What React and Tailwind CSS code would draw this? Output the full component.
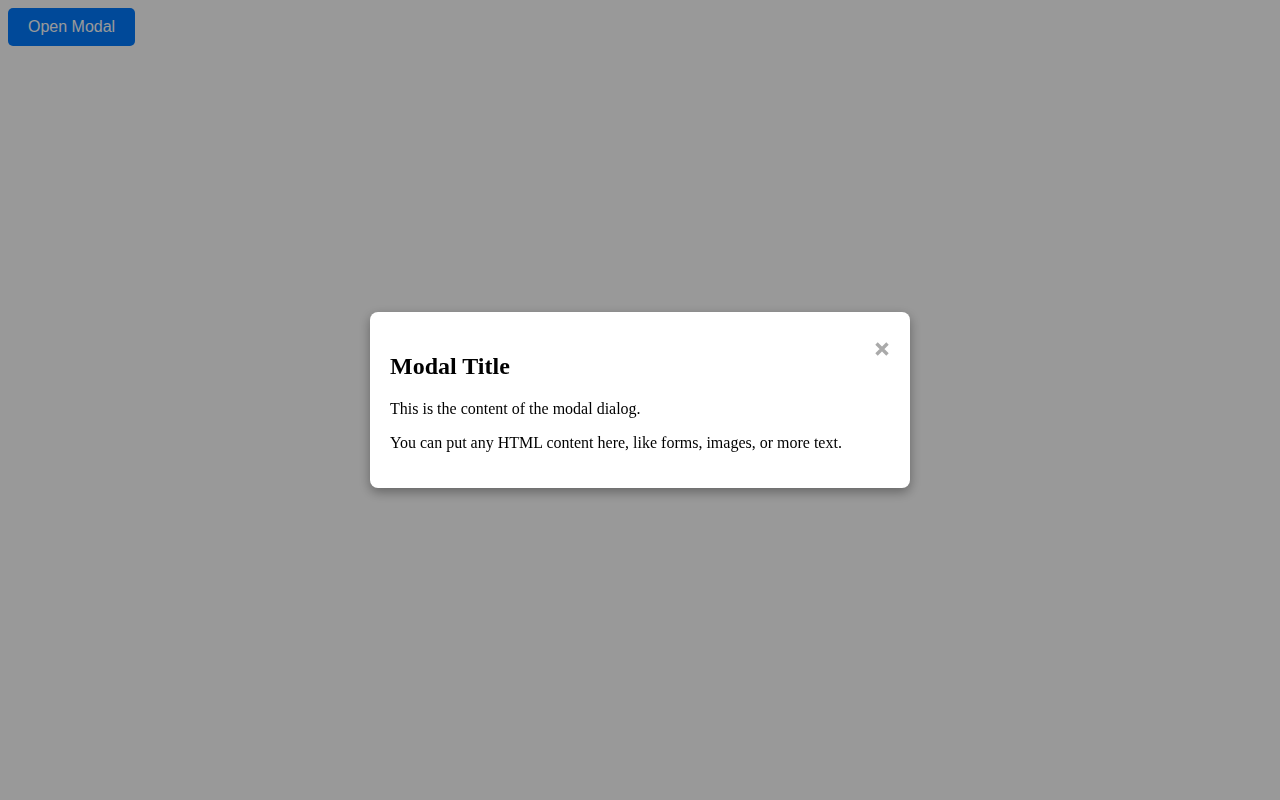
import React, { useState } from "react";

const CloseIcon = () => (
  <svg width="16" height="16" viewBox="0 0 16 16" fill="none">
    <path d="M2.5 2.5L13.5 13.5M13.5 2.5L2.5 13.5" stroke="#aaa" strokeWidth="3.4" />
  </svg>
);

const Modal = ({ onClose }) => {
  return (
    <div className="fixed inset-0 bg-black/40 flex items-center justify-center">
      <div className="w-[540px] bg-white rounded-lg p-5 shadow-[0_4px_12px_rgba(0,0,0,0.35)] font-['Liberation_Serif',serif] text-black">
        <span
          onClick={onClose}
          className="float-right mt-[9px] w-4 h-4 cursor-pointer"
        >
          <CloseIcon />
        </span>
        <h2 className="mt-[21px] mb-[20px] text-[24px] leading-[27.6px] font-bold">
          Modal Title
        </h2>
        <p className="text-[16px] leading-[18.4px] mb-[15px]">
          This is the content of the modal dialog.
        </p>
        <p className="text-[16px] leading-[18.4px] mb-4">
          You can put any HTML content here, like forms, images, or more text.
        </p>
      </div>
    </div>
  );
};

const App = () => {
  const [open, setOpen] = useState(true);

  return (
    <div className="min-h-screen bg-white p-2">
      <button
        onClick={() => setOpen(true)}
        className="bg-[#007bff] text-white font-['Liberation_Sans',Arial,sans-serif] text-[16px] leading-[18px] px-5 py-[10px] rounded-[5px] cursor-pointer"
      >
        Open Modal
      </button>
      {open && <Modal onClose={() => setOpen(false)} />}
    </div>
  );
};

export default App;
